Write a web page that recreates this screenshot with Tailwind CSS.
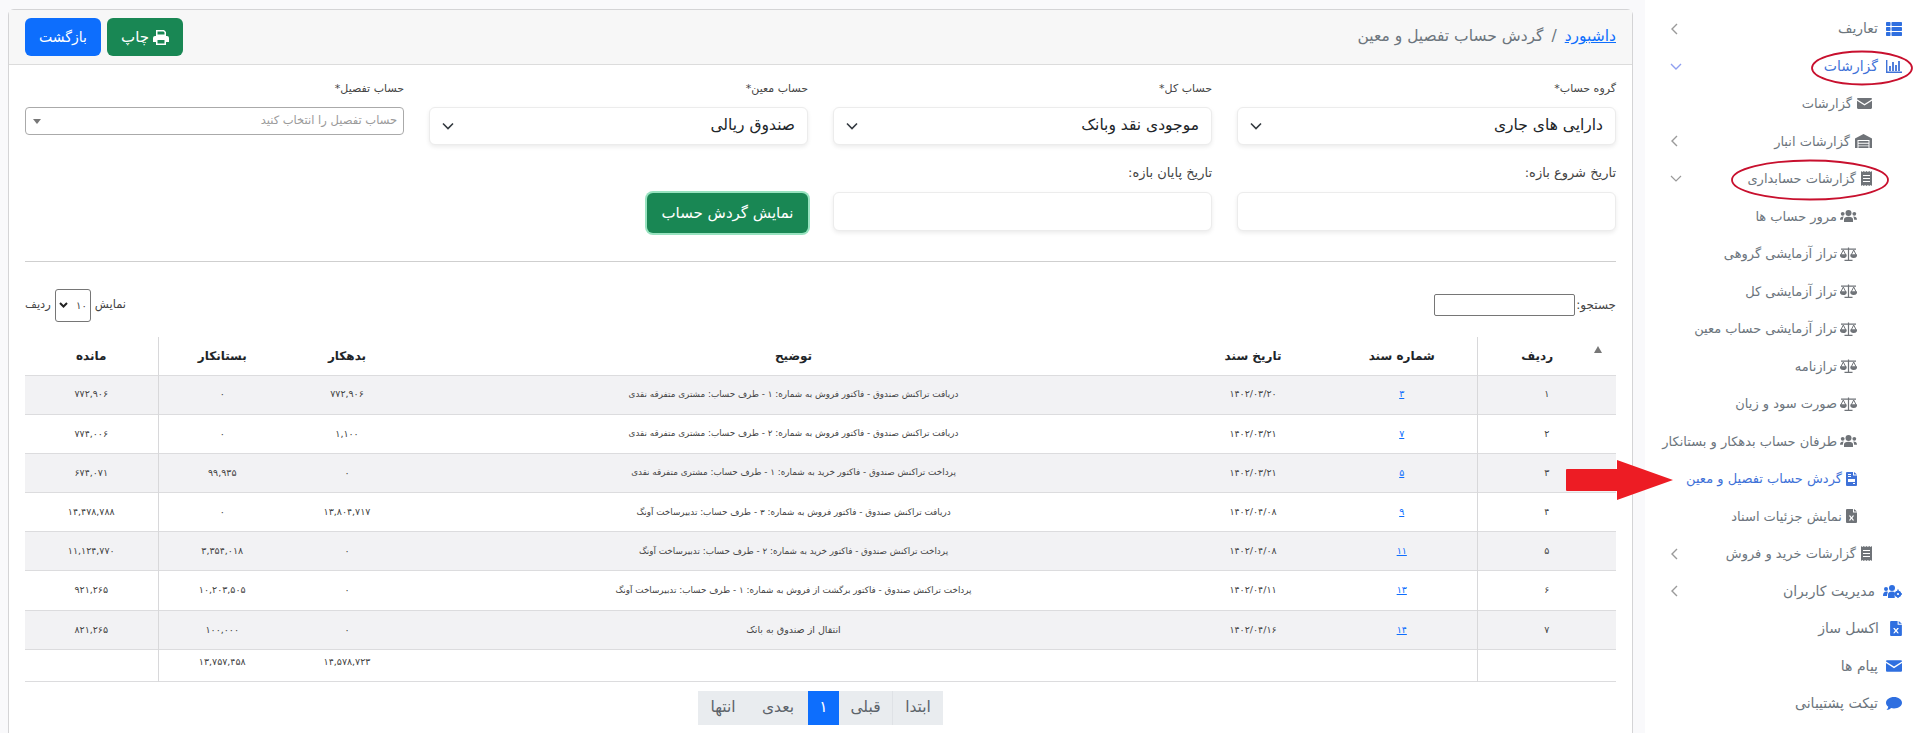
<!DOCTYPE html>
<html lang="fa" dir="rtl">
<head>
<meta charset="utf-8">
<title>گردش حساب تفصیل و معین</title>
<script src="https://cdn.jsdelivr.net/npm/@tailwindcss/browser@4"></script>
</head>
<body class="m-0 bg-white font-['DejaVu_Sans',sans-serif] text-[#212529]">
<div class="relative flex h-[733px] w-[1917px] overflow-hidden">

  <!-- Sidebar -->
  <aside class="w-[272px] shrink-0 bg-white pt-[10px] text-[#6c757d]">
    <ul class="flex flex-col text-[13px]">
      <li class="flex h-[37.5px] items-center pr-[15px] text-[14px]">
        <svg class="ml-[8px] h-[14px] w-[16px] text-[#2f6fe0]" viewBox="0 0 16 14" fill="currentColor"><rect x="0" y="0" width="4.5" height="4" rx=".7"/><rect x="5.5" y="0" width="10.5" height="4" rx=".7"/><rect x="0" y="5" width="4.5" height="4" rx=".7"/><rect x="5.5" y="5" width="10.5" height="4" rx=".7"/><rect x="0" y="10" width="4.5" height="4" rx=".7"/><rect x="5.5" y="10" width="10.5" height="4" rx=".7"/></svg>
        <span>تعاریف</span>
        <svg class="absolute left-[1670px] h-[12px] w-[9px]" viewBox="0 0 9 12" fill="none" stroke="#9a9a9a" stroke-width="1.4"><path d="M7 1 2 6l5 5"/></svg>
      </li>
      <li class="flex h-[37.5px] items-center pr-[15px] text-[14px] text-[#3f72d8]">
        <svg class="ml-[8px] h-[14px] w-[16px]" viewBox="0 0 16 14" fill="none" stroke="currentColor"><path d="M.7 1v12.3H16" stroke-width="1.4"/><path d="M4 12V7M7 12V3M10 12V6M13 12V2" stroke-width="1.8"/></svg>
        <span>گزارشات</span>
        <svg class="absolute left-[1670px] h-[9px] w-[12px]" viewBox="0 0 12 9" fill="none" stroke="#8f9ff0" stroke-width="1.4"><path d="M1 2l5 5 5-5"/></svg>
      </li>
      <li class="flex h-[37.5px] items-center pr-[45px]">
        <svg class="ml-[5px] h-[11px] w-[15px] text-[#6f7378]" viewBox="0 0 15 11" fill="currentColor"><path d="M0 1.200C0 .5.5 0 1.200 0h12.600c.7 0 1.200.5 1.200 1.200L7.500 6 0 1.200Z"/><path d="M0 2.800 7.500 7.600 15 2.800v7C15 10.500 14.500 11 13.800 11H1.200C.5 11 0 10.500 0 9.800Z"/></svg>
        <span>گزارشات</span>
      </li>
      <li class="flex h-[37.5px] items-center pr-[45px]">
        <svg class="ml-[5px] h-[14px] w-[17px] text-[#6f7378]" viewBox="0 0 17 14" fill="currentColor"><path d="M0 14V4.500L8.500 0 17 4.500V14h-2.500V6h-12v8Z"/><path d="M3.500 7h10v1.800h-10ZM3.500 9.700h10v1.800h-10ZM3.500 12.200h10V14h-10Z"/></svg>
        <span>گزارشات انبار</span>
        <svg class="absolute left-[1670px] h-[12px] w-[9px]" viewBox="0 0 9 12" fill="none" stroke="#9a9a9a" stroke-width="1.4"><path d="M7 1 2 6l5 5"/></svg>
      </li>
      <li class="flex h-[37.5px] items-center pr-[45px]">
        <svg class="ml-[5px] h-[15px] w-[11px] text-[#6f7378]" viewBox="0 0 11 15" fill="currentColor" fill-rule="evenodd"><path d="M0 0l1.400 1L2.800 0l1.300 1L5.500 0l1.400 1L8.200 0l1.400 1L11 0v15l-1.400-1-1.400 1-1.300-1-1.400 1-1.400-1-1.300 1-1.400-1L0 15ZM2 4v1h7V4Zm0 3v1h7V7Zm0 3v1h7v-1Z"/></svg>
        <span>گزارشات حسابداری</span>
        <svg class="absolute left-[1670px] h-[9px] w-[12px]" viewBox="0 0 12 9" fill="none" stroke="#9a9a9a" stroke-width="1.2"><path d="M1 2l5 5 5-5"/></svg>
      </li>
      <li class="flex h-[37.5px] items-center pr-[60px]">
        <svg class="ml-[3px] h-[12px] w-[17px] text-[#6f7378]" viewBox="0 0 17 12" fill="currentColor"><circle cx="8.500" cy="3" r="3"/><circle cx="2.700" cy="3.800" r="1.900"/><circle cx="14.300" cy="3.800" r="1.900"/><path d="M4 12V9.500C4 7.700 5.500 6.700 8.500 6.700S13 7.700 13 9.500V12ZM0 9.800C0 7.600 1.200 6.500 3.800 6.500 3.100 7.300 2.900 8.300 2.900 9.800ZM17 9.800c0-2.200-1.200-3.300-3.800-3.300.7.8.9 1.800.9 3.300Z"/></svg>
        <span>مرور حساب ها</span>
      </li>
      <li class="flex h-[37.5px] items-center pr-[60px]">
        <svg class="ml-[3px] h-[14px] w-[17px] text-[#6f7378]" viewBox="0 0 17 14" fill="none" stroke="currentColor" stroke-width="1.200"><path d="M1 2.200h15M8.500 .5V13M4.500 13.300h8"/><path d="M3.300 3 .8 8h5ZM13.700 3l-2.500 5h5Z" stroke-width="1"/><path d="M.5 8.200a2.800 2.200 0 0 0 5.600 0ZM10.900 8.200a2.800 2.200 0 0 0 5.600 0Z" fill="currentColor"/></svg>
        <span>تراز آزمایشی گروهی</span>
      </li>
      <li class="flex h-[37.5px] items-center pr-[60px]">
        <svg class="ml-[3px] h-[14px] w-[17px] text-[#6f7378]" viewBox="0 0 17 14" fill="none" stroke="currentColor" stroke-width="1.200"><path d="M1 2.200h15M8.500 .5V13M4.500 13.300h8"/><path d="M3.300 3 .8 8h5ZM13.700 3l-2.500 5h5Z" stroke-width="1"/><path d="M.5 8.200a2.800 2.200 0 0 0 5.600 0ZM10.900 8.200a2.800 2.200 0 0 0 5.600 0Z" fill="currentColor"/></svg>
        <span>تراز آزمایشی کل</span>
      </li>
      <li class="flex h-[37.5px] items-center pr-[60px]">
        <svg class="ml-[3px] h-[14px] w-[17px] text-[#6f7378]" viewBox="0 0 17 14" fill="none" stroke="currentColor" stroke-width="1.200"><path d="M1 2.200h15M8.500 .5V13M4.500 13.300h8"/><path d="M3.300 3 .8 8h5ZM13.700 3l-2.500 5h5Z" stroke-width="1"/><path d="M.5 8.200a2.800 2.200 0 0 0 5.600 0ZM10.900 8.200a2.800 2.200 0 0 0 5.600 0Z" fill="currentColor"/></svg>
        <span>تراز آزمایشی حساب معین</span>
      </li>
      <li class="flex h-[37.5px] items-center pr-[60px]">
        <svg class="ml-[3px] h-[14px] w-[17px] text-[#6f7378]" viewBox="0 0 17 14" fill="none" stroke="currentColor" stroke-width="1.200"><path d="M1 2.200h15M8.500 .5V13M4.500 13.300h8"/><path d="M3.300 3 .8 8h5ZM13.700 3l-2.500 5h5Z" stroke-width="1"/><path d="M.5 8.200a2.800 2.200 0 0 0 5.600 0ZM10.900 8.200a2.800 2.200 0 0 0 5.600 0Z" fill="currentColor"/></svg>
        <span>ترازنامه</span>
      </li>
      <li class="flex h-[37.5px] items-center pr-[60px]">
        <svg class="ml-[3px] h-[14px] w-[17px] text-[#6f7378]" viewBox="0 0 17 14" fill="none" stroke="currentColor" stroke-width="1.200"><path d="M1 2.200h15M8.500 .5V13M4.500 13.300h8"/><path d="M3.300 3 .8 8h5ZM13.700 3l-2.500 5h5Z" stroke-width="1"/><path d="M.5 8.200a2.800 2.200 0 0 0 5.600 0ZM10.900 8.200a2.800 2.200 0 0 0 5.600 0Z" fill="currentColor"/></svg>
        <span>صورت سود و زیان</span>
      </li>
      <li class="flex h-[37.5px] items-center pr-[60px]">
        <svg class="ml-[3px] h-[12px] w-[17px] text-[#6f7378]" viewBox="0 0 17 12" fill="currentColor"><circle cx="8.500" cy="3" r="3"/><circle cx="2.700" cy="3.800" r="1.900"/><circle cx="14.300" cy="3.800" r="1.900"/><path d="M4 12V9.500C4 7.700 5.500 6.700 8.500 6.700S13 7.700 13 9.500V12ZM0 9.800C0 7.600 1.200 6.500 3.800 6.500 3.100 7.300 2.900 8.300 2.900 9.800ZM17 9.800c0-2.200-1.200-3.300-3.800-3.300.7.8.9 1.800.9 3.300Z"/></svg>
        <span>طرفان حساب بدهکار و بستانکار</span>
      </li>
      <li class="flex h-[37.5px] items-center pr-[60px] text-[#3f72d8]">
        <svg class="ml-[4px] h-[14px] w-[11px]" viewBox="0 0 11 14" fill="currentColor" fill-rule="evenodd"><path d="M1 0h6v3.500h4V13a1 1 0 0 1-1 1H1a1 1 0 0 1-1-1V1a1 1 0 0 1 1-1Zm1 2v1h3V2Zm0 2v1h3V4Zm0 3v3h7V7Zm5 4v1h2v-1ZM8 0l3 2.500H8Z"/></svg>
        <span>گردش حساب تفصیل و معین</span>
      </li>
      <li class="flex h-[37.5px] items-center pr-[60px]">
        <svg class="ml-[4px] h-[14px] w-[11px] text-[#6f7378]" viewBox="0 0 11 14" fill="currentColor" fill-rule="evenodd"><path d="M1 0h6v3.500h4V13a1 1 0 0 1-1 1H1a1 1 0 0 1-1-1V1a1 1 0 0 1 1-1Zm1.800 6.500L4.600 9l-1.800 2.500h1.500l1.200-1.700 1.200 1.700h1.500L6.400 9l1.800-2.500H6.700L5.500 8.200 4.300 6.500ZM8 0l3 2.500H8Z"/></svg>
        <span>نمایش جزئیات اسناد</span>
      </li>
      <li class="flex h-[37.5px] items-center pr-[45px]">
        <svg class="ml-[5px] h-[15px] w-[11px] text-[#6f7378]" viewBox="0 0 11 15" fill="currentColor" fill-rule="evenodd"><path d="M0 0l1.400 1L2.800 0l1.300 1L5.500 0l1.400 1L8.200 0l1.400 1L11 0v15l-1.400-1-1.400 1-1.300-1-1.400 1-1.400-1-1.300 1-1.400-1L0 15ZM2 4v1h7V4Zm0 3v1h7V7Zm0 3v1h7v-1Z"/></svg>
        <span>گزارشات خرید و فروش</span>
        <svg class="absolute left-[1670px] h-[12px] w-[9px]" viewBox="0 0 9 12" fill="none" stroke="#9a9a9a" stroke-width="1.4"><path d="M7 1 2 6l5 5"/></svg>
      </li>
      <li class="flex h-[37.5px] items-center pr-[15px] text-[14px]">
        <svg class="ml-[8px] h-[13px] w-[19px] text-[#2f6fe0]" viewBox="0 0 19 13" fill="currentColor"><circle cx="9" cy="3" r="3"/><circle cx="3" cy="4" r="2"/><path d="M0 11c0-3 1-4.500 3.500-4.500S4 8 4 11ZM5 13V9.500C5 7.500 6.500 6.500 9 6.500c1 0 2 .2 2.700.6V13Z"/><circle cx="15" cy="9" r="3.200"/><circle cx="15" cy="9" r="1.100" fill="#fff"/><path d="M15 4.500v2M15 11.500v2M10.500 9h2M17.500 9h2" stroke="currentColor" stroke-width="1.400"/></svg>
        <span>مدیریت کاربران</span>
        <svg class="absolute left-[1670px] h-[12px] w-[9px]" viewBox="0 0 9 12" fill="none" stroke="#9a9a9a" stroke-width="1.4"><path d="M7 1 2 6l5 5"/></svg>
      </li>
      <li class="flex h-[37.5px] items-center pr-[15px] text-[14px]">
        <svg class="ml-[11px] h-[15px] w-[12px] text-[#2f6fe0]" viewBox="0 0 11 14" fill="currentColor" fill-rule="evenodd"><path d="M1 0h6v3.500h4V13a1 1 0 0 1-1 1H1a1 1 0 0 1-1-1V1a1 1 0 0 1 1-1Zm1.800 6.500L4.600 9l-1.800 2.500h1.500l1.200-1.700 1.200 1.700h1.500L6.400 9l1.800-2.500H6.700L5.500 8.200 4.300 6.500ZM8 0l3 2.500H8Z"/></svg>
        <span>اکسل ساز</span>
      </li>
      <li class="flex h-[37.5px] items-center pr-[15px] text-[14px]">
        <svg class="ml-[8px] h-[12px] w-[16px] text-[#2f6fe0]" viewBox="0 0 15 11" fill="currentColor"><path d="M0 1.200C0 .5.5 0 1.200 0h12.600c.7 0 1.200.5 1.200 1.200L7.500 6 0 1.200Z"/><path d="M0 2.800 7.500 7.600 15 2.800v7C15 10.500 14.500 11 13.800 11H1.200C.5 11 0 10.500 0 9.800Z"/></svg>
        <span>پیام ها</span>
      </li>
      <li class="flex h-[37.5px] items-center pr-[15px] text-[14px]">
        <svg class="ml-[8px] h-[13px] w-[16px] text-[#2f6fe0]" viewBox="0 0 16 13" fill="currentColor"><path d="M8 0c4.400 0 8 2.500 8 5.700s-3.600 5.700-8 5.700c-1 0-2-.1-2.900-.4C4 12 2.300 13 .5 13c1-1 1.600-2 1.800-3.300C.9 8.700 0 7.300 0 5.700 0 2.500 3.600 0 8 0Z"/></svg>
        <span>تیکت پشتیبانی</span>
      </li>
    </ul>
  </aside>

  <!-- Main -->
  <main class="h-full min-w-0 flex-1 bg-[#f9f9fb] pt-[9px] pr-[12px] pl-[8px]">
    <section class="h-[800px] rounded-t-[6px] border border-[#d4d4d6] bg-white">
      <header class="flex h-[55px] items-center justify-between border-b border-[#dcdcdc] bg-[#f7f7f7] px-[16px]">
        <nav class="flex items-center text-[15.500px] text-[#6c757d]">
          <a href="#" class="text-[#0d6efd] underline">داشبورد</a>
          <span class="mx-[8px]">/</span>
          <span>گردش حساب تفصیل و معین</span>
        </nav>
        <div class="flex gap-[6px]">
          <button class="flex h-[38px] w-[76px] items-center justify-center gap-[4px] rounded-[6px] bg-[#198754] text-[15px] text-white">
            <svg class="h-[15px] w-[16px]" viewBox="0 0 16 15" fill="currentColor" fill-rule="evenodd"><path d="M3 0h8l2 2v4H3Zm1.500 1.400v3.200h7V2.600l-1-1.200ZM2 6h12a2 2 0 0 1 2 2v4h-3v3H3v-3H0V8a2 2 0 0 1 2-2Zm2.500 4v3.500h7V10Z"/></svg>
            <span>چاپ</span>
          </button>
          <button class="h-[38px] w-[76px] rounded-[6px] bg-[#0d6efd] text-[14px] text-white">بازگشت</button>
        </div>
      </header>

      <div class="px-[16px]">
        <div class="grid grid-cols-4 gap-x-[25px] pt-[16px]">
          <div>
            <label class="block h-[26px] text-[11px] leading-[16px] text-[#444]">گروه حساب*</label>
            <div class="flex h-[38px] items-center justify-between rounded-[6px] border border-[#ececec] bg-white px-[12px] text-[15.5px] shadow-[0_2px_4px_rgba(0,0,0,0.08)]">
              <span>دارایی های جاری</span>
              <svg class="h-[8px] w-[12px]" viewBox="0 0 12 8" fill="none" stroke="#343a40" stroke-width="1.600"><path d="m1 1.500 5 5 5-5"/></svg>
            </div>
          </div>
          <div>
            <label class="block h-[26px] text-[11px] leading-[16px] text-[#444]">حساب کل*</label>
            <div class="flex h-[38px] items-center justify-between rounded-[6px] border border-[#ececec] bg-white px-[12px] text-[15.5px] shadow-[0_2px_4px_rgba(0,0,0,0.08)]">
              <span>موجودی نقد وبانک</span>
              <svg class="h-[8px] w-[12px]" viewBox="0 0 12 8" fill="none" stroke="#343a40" stroke-width="1.600"><path d="m1 1.500 5 5 5-5"/></svg>
            </div>
          </div>
          <div>
            <label class="block h-[26px] text-[11px] leading-[16px] text-[#444]">حساب معین*</label>
            <div class="flex h-[38px] items-center justify-between rounded-[6px] border border-[#ececec] bg-white px-[12px] text-[15.5px] shadow-[0_2px_4px_rgba(0,0,0,0.08)]">
              <span>صندوق ریالی</span>
              <svg class="h-[8px] w-[12px]" viewBox="0 0 12 8" fill="none" stroke="#343a40" stroke-width="1.600"><path d="m1 1.500 5 5 5-5"/></svg>
            </div>
          </div>
          <div>
            <label class="block h-[26px] text-[11px] leading-[16px] text-[#444]">حساب تفصیل*</label>
            <div class="flex h-[28px] items-center justify-between rounded-[4px] border border-[#aaa] bg-white px-[6px] text-[11.500px] text-[#9a9a9a]">
              <span>حساب تفصیل را انتخاب کنید</span>
              <svg class="ml-[1px] h-[5px] w-[8px]" viewBox="0 0 8 5" fill="#777"><path d="M0 0h8L4 5Z"/></svg>
            </div>
          </div>
        </div>

        <div class="grid grid-cols-4 gap-x-[25px] pt-[18px]">
          <div>
            <label class="block h-[29px] text-[13px] leading-[20px] text-[#444]">تاریخ شروع بازه:</label>
            <input class="block h-[39px] w-full rounded-[6px] border border-[#ececec] bg-white shadow-[0_2px_4px_rgba(0,0,0,0.08)]" aria-label="start">
          </div>
          <div>
            <label class="block h-[29px] text-[13px] leading-[20px] text-[#444]">تاریخ پایان بازه:</label>
            <input class="block h-[39px] w-full rounded-[6px] border border-[#ececec] bg-white shadow-[0_2px_4px_rgba(0,0,0,0.08)]" aria-label="end">
          </div>
          <div class="pt-[30px]">
            <button class="h-[40px] w-[161px] rounded-[6px] bg-[#198754] text-[15px] font-medium text-white ring-[2px] ring-[#98e3c0]">نمایش گردش حساب</button>
          </div>
        </div>

        <hr class="mt-[28px] border-[#cfcfcf]">

        <div class="flex h-[75px] items-center justify-between pt-[11px] text-[12px] text-[#444]">
          <label class="flex items-center">جستجو:<input class="mr-[1px] h-[22px] w-[141px] rounded-[2px] border border-[#767676] bg-white" aria-label="search"></label>
          <div class="flex items-center gap-[4px] text-[11.500px]">
            <span>نمایش</span>
            <div class="flex h-[33px] w-[36px] items-center justify-between rounded-[3px] border border-[#767676] px-[3px] text-[10px]">
              <span>۱۰</span>
              <svg class="h-[6px] w-[9px]" viewBox="0 0 9 6" fill="none" stroke="#222" stroke-width="2"><path d="m1 1 3.500 3.500L8 1"/></svg>
            </div>
            <span>ردیف</span>
          </div>
        </div>

        <table class="w-[1591px] table-fixed border-collapse text-center text-[9.500px] text-[#444]">
          <colgroup>
            <col class="w-[139px]"><col class="w-[150px]"><col class="w-[148px]"><col class="w-[771px]"><col class="w-[122px]"><col class="w-[128px]"><col class="w-[133px]">
          </colgroup>
          <thead class="text-[12px] font-bold text-[#212529]">
            <tr class="h-[38px] border-b border-[#dcdcde]">
              <th class="relative border-l border-[#d8d8da] pr-[19px] font-bold">ردیف<svg class="absolute top-[9px] right-[14px] h-[7px] w-[8px]" viewBox="0 0 8 7" fill="#777"><path d="M4 0l4 7H0Z"/></svg></th>
              <th class="font-bold">شماره سند</th>
              <th class="font-bold">تاریخ سند</th>
              <th class="font-bold">توضیح</th>
              <th class="font-bold">بدهکار</th>
              <th class="font-bold">بستانکار</th>
              <th class="border-r border-[#d8d8da] font-bold">مانده</th>
            </tr>
          </thead>
          <tbody>
            <tr class="h-[39.2px] border-b border-[#dcdcde] bg-[#f2f2f4]">
              <td class="border-l border-[#d8d8da]">۱</td><td><a href="#" class="text-[#0d6efd] underline">۳</a></td><td>۱۴۰۲/۰۳/۲۰</td>
              <td class="text-[8.800px]">دریافت تراکنش صندوق - فاکتور فروش به شماره: ۱ - طرف حساب: مشتری متفرقه نقدی</td>
              <td>۷۷۲,۹۰۶</td><td>۰</td><td class="border-r border-[#d8d8da]">۷۷۲,۹۰۶</td>
            </tr>
            <tr class="h-[39.2px] border-b border-[#dcdcde]">
              <td class="border-l border-[#d8d8da]">۲</td><td><a href="#" class="text-[#0d6efd] underline">۷</a></td><td>۱۴۰۲/۰۳/۲۱</td>
              <td class="text-[8.800px]">دریافت تراکنش صندوق - فاکتور فروش به شماره: ۲ - طرف حساب: مشتری متفرقه نقدی</td>
              <td>۱,۱۰۰</td><td>۰</td><td class="border-r border-[#d8d8da]">۷۷۴,۰۰۶</td>
            </tr>
            <tr class="h-[39.2px] border-b border-[#dcdcde] bg-[#f2f2f4]">
              <td class="border-l border-[#d8d8da]">۳</td><td><a href="#" class="text-[#0d6efd] underline">۵</a></td><td>۱۴۰۲/۰۳/۲۱</td>
              <td class="text-[8.800px]">پرداخت تراکنش صندوق - فاکتور خرید به شماره: ۱ - طرف حساب: مشتری متفرقه نقدی</td>
              <td>۰</td><td>۹۹,۹۳۵</td><td class="border-r border-[#d8d8da]">۶۷۴,۰۷۱</td>
            </tr>
            <tr class="h-[39.2px] border-b border-[#dcdcde]">
              <td class="border-l border-[#d8d8da]">۴</td><td><a href="#" class="text-[#0d6efd] underline">۹</a></td><td>۱۴۰۲/۰۴/۰۸</td>
              <td class="text-[8.800px]">دریافت تراکنش صندوق - فاکتور فروش به شماره: ۳ - طرف حساب: تدبیرساخت آونگ</td>
              <td>۱۳,۸۰۴,۷۱۷</td><td>۰</td><td class="border-r border-[#d8d8da]">۱۴,۴۷۸,۷۸۸</td>
            </tr>
            <tr class="h-[39.2px] border-b border-[#dcdcde] bg-[#f2f2f4]">
              <td class="border-l border-[#d8d8da]">۵</td><td><a href="#" class="text-[#0d6efd] underline">۱۱</a></td><td>۱۴۰۲/۰۴/۰۸</td>
              <td class="text-[8.800px]">پرداخت تراکنش صندوق - فاکتور خرید به شماره: ۲ - طرف حساب: تدبیرساخت آونگ</td>
              <td>۰</td><td>۳,۳۵۴,۰۱۸</td><td class="border-r border-[#d8d8da]">۱۱,۱۲۴,۷۷۰</td>
            </tr>
            <tr class="h-[39.2px] border-b border-[#dcdcde]">
              <td class="border-l border-[#d8d8da]">۶</td><td><a href="#" class="text-[#0d6efd] underline">۱۳</a></td><td>۱۴۰۲/۰۴/۱۱</td>
              <td class="text-[8.800px]">پرداخت تراکنش صندوق - فاکتور برگشت از فروش به شماره: ۱ - طرف حساب: تدبیرساخت آونگ</td>
              <td>۰</td><td>۱۰,۲۰۳,۵۰۵</td><td class="border-r border-[#d8d8da]">۹۲۱,۲۶۵</td>
            </tr>
            <tr class="h-[39.2px] border-b border-[#dcdcde] bg-[#f2f2f4]">
              <td class="border-l border-[#d8d8da]">۷</td><td><a href="#" class="text-[#0d6efd] underline">۱۴</a></td><td>۱۴۰۲/۰۴/۱۶</td>
              <td class="text-[9.500px]">انتقال از صندوق به بانک</td>
              <td>۰</td><td>۱۰۰,۰۰۰</td><td class="border-r border-[#d8d8da]">۸۲۱,۲۶۵</td>
            </tr>
          </tbody>
          <tfoot>
            <tr class="h-[32px] border-b border-[#dcdcde] align-top">
              <td class="border-l border-[#d8d8da]"></td><td></td><td></td><td></td>
              <td class="pt-[5px]">۱۴,۵۷۸,۷۲۳</td><td class="pt-[5px]">۱۳,۷۵۷,۴۵۸</td><td class="border-r border-[#d8d8da]"></td>
            </tr>
          </tfoot>
        </table>

        <div class="mt-[9px] flex justify-center text-[15.500px] text-[#5c636a]">
          <div class="flex h-[34px] bg-[#e9ecef]">
            <a class="flex w-[51px] items-center justify-center border-l border-[#dfe2e6]">ابتدا</a>
            <a class="flex w-[53px] items-center justify-center">قبلی</a>
            <a class="flex w-[31px] items-center justify-center bg-[#0d6efd] text-white">۱</a>
            <a class="flex w-[60px] items-center justify-center">بعدی</a>
            <a class="flex w-[50px] items-center justify-center">انتها</a>
          </div>
        </div>
      </div>
    </section>
  </main>

  <!-- Hand-drawn annotations lying over the page -->
  <svg class="pointer-events-none absolute top-0 left-0 h-[733px] w-[1917px]" viewBox="0 0 1917 733" fill="none">
    <ellipse cx="1862" cy="68" rx="50" ry="16.500" stroke="#c8102e" stroke-width="1.800"/>
    <ellipse cx="1810" cy="180" rx="78" ry="19.500" stroke="#c8102e" stroke-width="1.800"/>
    <path d="M1567 469h50v-9l56 20-56 20v-9h-50a1 1 0 0 1-1-1v-20a1 1 0 0 1 1-1Z" fill="#ed1c24"/>
  </svg>
</div>
</body>
</html>
